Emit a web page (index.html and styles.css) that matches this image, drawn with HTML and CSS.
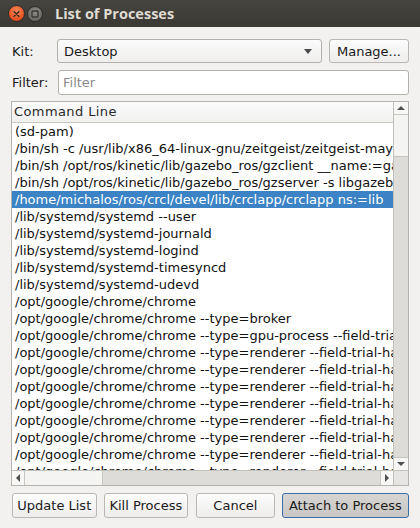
FILE: index.html
```html
<!DOCTYPE html>
<html>
<head>
<meta charset="utf-8">
<link rel="stylesheet" href="styles.css">
</head>
<body>
<div class="window">
  <div class="titlebar">
    <span class="wbtn close">
      <svg width="16" height="16" viewBox="0 0 16 16"><path d="M5.5 5.5 L10.5 10.5 M10.5 5.5 L5.5 10.5" stroke="#3a2a22" stroke-width="1.6" stroke-linecap="round"/></svg>
    </span>
    <span class="wbtn minimize">
      <svg width="14" height="14" viewBox="0 0 14 14"><rect x="4" y="4" width="6" height="6" rx="1" fill="none" stroke="#3a3935" stroke-width="1.4"/></svg>
    </span>
    <span class="title">List of Processes</span>
  </div>
  <div class="content">
    <div class="form">
      <label class="lbl">Kit:</label>
      <div class="combo"><span class="combo-text">Desktop</span><span class="combo-arrow"></span></div>
      <button class="btn manage">Manage...</button>
      <label class="lbl">Filter:</label>
      <input class="filter" type="text" placeholder="Filter">
    </div>
    <div class="tree">
      <div class="tree-main">
        <div class="view">
          <div class="header">Command Line</div>
          <div class="rows">
            <div class="row">(sd-pam)</div>
            <div class="row">/bin/sh -c /usr/lib/x86_64-linux-gnu/zeitgeist/zeitgeist-maybe-vacuum</div>
            <div class="row">/bin/sh /opt/ros/kinetic/lib/gazebo_ros/gzclient __name:=gazebo_gui</div>
            <div class="row">/bin/sh /opt/ros/kinetic/lib/gazebo_ros/gzserver -s libgazebo_ros_paths_plugin.so</div>
            <div class="row selected">/home/michalos/ros/crcl/devel/lib/crclapp/crclapp ns:=lib</div>
            <div class="row">/lib/systemd/systemd --user</div>
            <div class="row">/lib/systemd/systemd-journald</div>
            <div class="row">/lib/systemd/systemd-logind</div>
            <div class="row">/lib/systemd/systemd-timesyncd</div>
            <div class="row">/lib/systemd/systemd-udevd</div>
            <div class="row">/opt/google/chrome/chrome</div>
            <div class="row">/opt/google/chrome/chrome --type=broker</div>
            <div class="row">/opt/google/chrome/chrome --type=gpu-process --field-trial-handle</div>
            <div class="row">/opt/google/chrome/chrome --type=renderer --field-trial-handle</div>
            <div class="row">/opt/google/chrome/chrome --type=renderer --field-trial-handle</div>
            <div class="row">/opt/google/chrome/chrome --type=renderer --field-trial-handle</div>
            <div class="row">/opt/google/chrome/chrome --type=renderer --field-trial-handle</div>
            <div class="row">/opt/google/chrome/chrome --type=renderer --field-trial-handle</div>
            <div class="row">/opt/google/chrome/chrome --type=renderer --field-trial-handle</div>
            <div class="row">/opt/google/chrome/chrome --type=renderer --field-trial-handle</div>
            <div class="row">/opt/google/chrome/chrome --type=renderer --field-trial-handle</div>
          </div>
        </div>
        <div class="vscroll">
          <div class="sbtn vbtn"><span class="tri up"></span></div>
          <div class="vthumb"></div>
          <div class="vtrough"></div>
          <div class="sbtn vbtn bottom"><span class="tri down"></span></div>
        </div>
      </div>
      <div class="tree-bottom">
        <div class="hscroll">
          <div class="sbtn hbtn"><span class="tri left"></span></div>
          <div class="hthumb"></div>
          <div class="htrough"></div>
          <div class="sbtn hbtn right"><span class="tri right"></span></div>
        </div>
        <div class="corner"></div>
      </div>
    </div>
    <div class="buttons">
      <button class="btn b-update">Update List</button>
      <button class="btn b-kill">Kill Process</button>
      <button class="btn b-cancel">Cancel</button>
      <button class="btn b-attach">Attach to Process</button>
    </div>
  </div>
</div>
</body>
</html>
```
FILE: styles.css
```css
* { box-sizing: border-box; }
html, body { margin: 0; padding: 0; }
body {
  width: 420px;
  height: 528px;
  overflow: hidden;
  background: #f2f1f0;
  font-family: "DejaVu Sans", "Open Sans", sans-serif;
  font-size: 13px;
  color: #1a1a1a;
}
.window { width: 420px; height: 528px; display: flex; flex-direction: column; }

.titlebar {
  height: 27px;
  flex: none;
  background: linear-gradient(#45443f, #3a3934);
  display: flex;
  align-items: center;
  padding-left: 8px;
}
.wbtn {
  display: flex;
  align-items: center;
  justify-content: center;
  border-radius: 50%;
}
.wbtn.close {
  width: 17px; height: 17px;
  background: radial-gradient(circle at 50% 35%, #f88a5c, #e4501d 70%, #c94015);
  border: 1px solid #2f2e2a;
}
.wbtn.minimize {
  width: 16px; height: 16px;
  margin-left: 2px;
  background: radial-gradient(circle at 50% 35%, #8c8b86, #6b6a65 70%);
  border: 1px solid #2f2e2a;
}
.title {
  margin-left: 12px;
  color: #dfdbd2;
  font-family: "Open Sans", "DejaVu Sans", sans-serif;
  font-weight: bold;
  font-size: 14.5px;
}

.content {
  flex: 1;
  display: flex;
  flex-direction: column;
  padding: 12px 11px 0 11px;
}
.form {
  display: grid;
  grid-template-columns: 39px 1fr 80px;
  grid-template-rows: 24px 25px;
  column-gap: 7px;
  row-gap: 7px;
}
.lbl {
  padding-left: 1px;
  align-self: center;
  color: #1a1a1a;
}
.combo {
  border: 1px solid #b3b1ab;
  border-radius: 3px;
  background: linear-gradient(#fbfbfb, #efeeed);
  display: flex;
  align-items: center;
  padding-left: 6px;
  padding-right: 9px;
}
.combo-text { flex: 1; }
.combo-arrow {
  width: 0; height: 0;
  border-left: 4.5px solid transparent;
  border-right: 4.5px solid transparent;
  border-top: 5px solid #4a4a4a;
}
.btn {
  font-family: "DejaVu Sans", "Open Sans", sans-serif;
  font-size: 13px;
  color: #1a1a1a;
  border: 1px solid #b9b7b1;
  border-radius: 3px;
  background: linear-gradient(#fcfcfc, #eeedec);
  padding: 0;
  margin: 0;
  white-space: nowrap;
}
.filter {
  grid-column: 2 / 4;
  border: 1px solid #b3b1ab;
  border-radius: 3px;
  background: #ffffff;
  font-family: "DejaVu Sans", "Open Sans", sans-serif;
  font-size: 13px;
  padding: 0 4px;
  margin: 0 0 0 1px;
  outline: none;
}
.filter::placeholder { color: #8b8b8b; }

.tree {
  margin-top: 6px;
  height: 385px;
  border: 1px solid #b5b3ae;
  display: flex;
  flex-direction: column;
  background: #ffffff;
}
.tree-main { flex: 1; display: flex; min-height: 0; }
.view { flex: 1; overflow: hidden; display: flex; flex-direction: column; }
.header {
  height: 21px;
  flex: none;
  border-bottom: 1px solid #c9c7c2;
  background: linear-gradient(#fbfbfb, #f1f0ef);
  padding-left: 2px;
  line-height: 20px;
  color: #2a2a2a;
  letter-spacing: 0.4px;
}
.rows { flex: 1; overflow: hidden; }
.row {
  height: 17px;
  line-height: 17px;
  white-space: nowrap;
  padding-left: 3px;
  color: #111;
}
.row.selected { background: #3b83c4; color: #ffffff; }

.vscroll {
  width: 15px;
  flex: none;
  display: flex;
  flex-direction: column;
  border-left: 1px solid #c3c1bc;
  background: #dddcd9;
}
.sbtn {
  background: #f7f7f6;
  display: flex;
  align-items: center;
  justify-content: center;
  flex: none;
}
.vbtn { height: 13px; border-bottom: 1px solid #c8c6c1; }
.vbtn.bottom { border-bottom: none; border-top: 1px solid #c8c6c1; }
.vthumb { height: 42px; background: #f4f4f3; border-bottom: 1px solid #c8c6c1; flex: none; }
.vtrough { flex: 1; }

.tree-bottom { height: 15px; flex: none; display: flex; border-top: 1px solid #c3c1bc; }
.hscroll { flex: 1; display: flex; background: #dddcd9; }
.hbtn { width: 13px; border-right: 1px solid #c8c6c1; }
.hbtn.right { border-right: none; border-left: 1px solid #c8c6c1; }
.hthumb { width: 78px; background: #f4f4f3; border-right: 1px solid #c8c6c1; flex: none; }
.htrough { flex: 1; }
.corner { width: 15px; flex: none; background: #e6e5e3; border-left: 1px solid #c3c1bc; }

.tri { width: 0; height: 0; }
.tri.up { border-left: 4px solid transparent; border-right: 4px solid transparent; border-bottom: 4px solid #505050; }
.tri.down { border-left: 4px solid transparent; border-right: 4px solid transparent; border-top: 4px solid #505050; }
.tri.left { border-top: 4px solid transparent; border-bottom: 4px solid transparent; border-right: 4px solid #505050; }
.tri.right { border-top: 4px solid transparent; border-bottom: 4px solid transparent; border-left: 4px solid #505050; }

.buttons {
  margin-top: 7px;
  height: 25px;
  display: flex;
  gap: 7px;
  padding-left: 1px;
}
.b-update { width: 85px; }
.b-kill { width: 85px; }
.b-cancel { width: 79px; margin-left: 1px; }
.b-attach {
  width: 128px;
  border-color: #3b6ea8;
  background: linear-gradient(#d6d5d3, #c8c7c4);
}
```
